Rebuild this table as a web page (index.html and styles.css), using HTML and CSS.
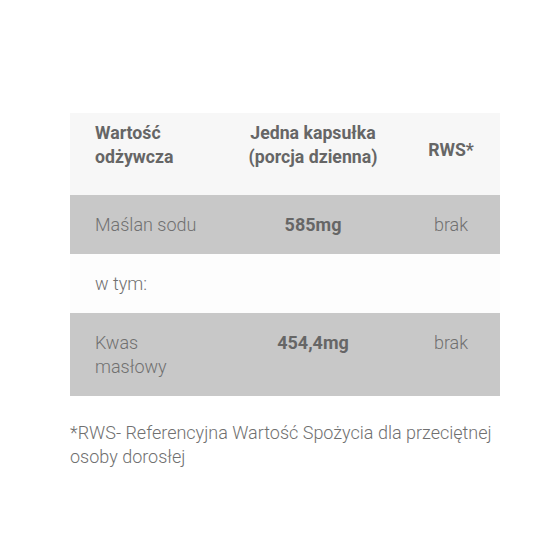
FILE: index.html
```html
<!DOCTYPE html>
<html lang="pl">
<head>
<meta charset="utf-8">
<link rel="stylesheet" href="styles.css">
</head>
<body>
<div class="wrap">
  <table class="nutri">
    <colgroup>
      <col class="c1"><col class="c2"><col class="c3">
    </colgroup>
    <thead>
      <tr class="head">
        <th class="left">Wartość<br>odżywcza</th>
        <th>Jedna kapsułka<br>(porcja dzienna)</th>
        <th class="rws">RWS*</th>
      </tr>
    </thead>
    <tbody>
      <tr class="gray">
        <td class="left">Maślan sodu</td>
        <td class="val">585mg</td>
        <td>brak</td>
      </tr>
      <tr class="white">
        <td class="left">w tym:</td>
        <td></td>
        <td></td>
      </tr>
      <tr class="gray">
        <td class="left">Kwas<br>masłowy</td>
        <td class="val">454,4mg</td>
        <td>brak</td>
      </tr>
    </tbody>
  </table>
  <p class="note">*RWS- Referencyjna Wartość Spożycia dla przeciętnej osoby dorosłej</p>
</div>
</body>
</html>
```

FILE: styles.css
```css
html, body {
  margin: 0;
  padding: 0;
  background: #ffffff;
}
body {
  font-family: Roboto, "Liberation Sans", sans-serif;
  color: #707070;
}
.wrap {
  padding: 113px 0 0 70px;
  width: 430px;
}
.nutri {
  width: 430px;
  border-collapse: collapse;
  table-layout: fixed;
  font-size: 18px;
  line-height: 24px;
}
.c1 { width: 154px; }
.c2 { width: 178px; }
.c3 { width: 98px; }
.nutri th, .nutri td {
  padding: 18px 0 17px;
  text-align: center;
  vertical-align: top;
}
.nutri .left {
  text-align: left;
  padding-left: 25px;
}
.head {
  background: #f7f7f7;
}
.head th {
  font-size: 17.7px;
  font-weight: 700;
  color: #666666;
  padding: 8px 0 26px;
  vertical-align: top;
}
.head th.left { padding-left: 25px; }
.head th.rws { padding-top: 25px; }
.gray { background: #c8c8c8; }
.white { background: #fdfdfd; }
.nutri td {
  font-weight: 300;
}
.nutri td.val {
  font-weight: 700;
  color: #666666;
}
.note {
  margin: 25px 0 0;
  font-size: 18px;
  font-weight: 300;
  line-height: 24px;
  color: #707070;
}
```
